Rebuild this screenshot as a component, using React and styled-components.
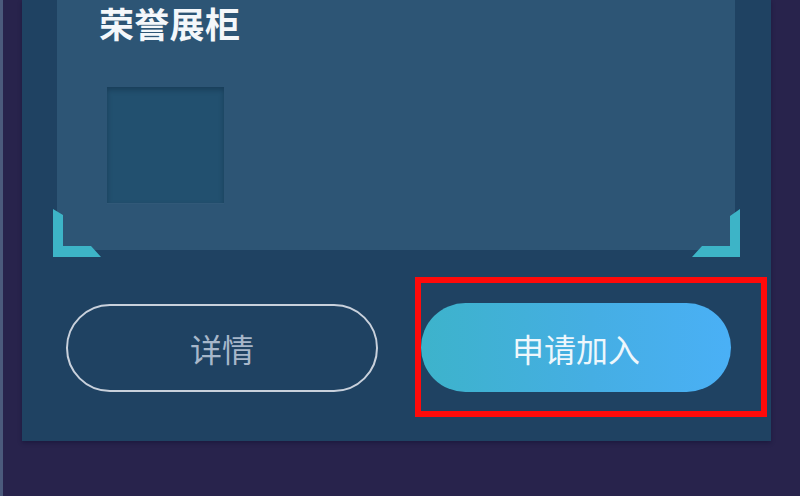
import React from "react";
import styled, { createGlobalStyle } from "styled-components";

const GlobalStyle = createGlobalStyle`
  html, body {
    margin: 0;
    padding: 0;
    background: #28234c;
    font-family: "Noto Sans CJK SC", "Noto Sans", sans-serif;
  }
`;

const Page = styled.div`
  width: 800px;
  height: 496px;
  box-sizing: border-box;
  overflow: hidden;
  display: flex;
  align-items: flex-start;
  background: #28234c;
  border-left: 3px solid #4b5a7c;
  padding-left: 19px;
`;

const Card = styled.div`
  width: 749px;
  height: 441px;
  box-sizing: border-box;
  background: #1f4262;
  padding: 0 36px 0 35px;
  display: flex;
  flex-direction: column;
  box-shadow: 0 2px 4px rgba(10, 10, 40, 0.35);
`;

const Showcase = styled.div`
  position: relative;
  height: 250px;
  box-sizing: border-box;
  background: #2d5575;
  padding: 2px 0 0 42px;
  display: flex;
  flex-direction: column;
`;

const Title = styled.h2`
  margin: 0;
  font-size: 35px;
  line-height: 42px;
  font-weight: 700;
  color: #f4f7fa;
  letter-spacing: 0.3px;
`;

const Slot = styled.div`
  width: 117px;
  height: 116px;
  margin: 43px 0 0 8px;
  background: #22506f;
  box-shadow: inset 0 3px 5px rgba(10, 30, 50, 0.35), 0 1px 1px rgba(60, 100, 130, 0.3);
`;

const Bracket = styled.svg`
  position: absolute;
  bottom: -7px;
  width: 48px;
  height: 48px;
  ${(p) => (p.$side === "left" ? "left: -4px;" : "right: -5px;")}
`;

const Actions = styled.div`
  display: flex;
  align-items: center;
  gap: 43px;
  margin-top: 53px;
  padding-left: 9px;
`;

const Pill = styled.button`
  box-sizing: border-box;
  height: 89px;
  border-radius: 45px;
  font-family: "Noto Sans CJK SC", "Noto Sans", sans-serif;
  font-size: 32px;
  display: flex;
  align-items: center;
  justify-content: center;
  cursor: pointer;
  padding: 0;
`;

const GhostPill = styled(Pill)`
  width: 312px;
  height: 88px;
  background: transparent;
  border: 2px solid #c9d1dc;
  color: #a7b7ca;
`;

const JoinWrap = styled.div`
  position: relative;
`;

const PrimaryPill = styled(Pill)`
  width: 310px;
  border: none;
  color: #eef7fc;
  background: linear-gradient(90deg, #3db3cb 0%, #45aee3 55%, #4ab0f6 100%);
`;

const Highlight = styled.div`
  position: absolute;
  left: -6px;
  top: -26px;
  width: 352px;
  height: 140px;
  box-sizing: border-box;
  border: 6px solid #ff0a0a;
  pointer-events: none;
`;

function CornerMark({ side }) {
  const pts =
    side === "left"
      ? "0,0 10,6 10,37 38,37 48,48 0,48"
      : "48,0 38,7 38,37 10,37 0,48 48,48";
  return (
    <Bracket $side={side} viewBox="0 0 48 48">
      <polygon points={pts} fill="#3db4c7" />
    </Bracket>
  );
}

export default function App() {
  return (
    <>
      <GlobalStyle />
      <Page>
        <Card>
          <Showcase>
            <Title>荣誉展柜</Title>
            <Slot />
            <CornerMark side="left" />
            <CornerMark side="right" />
          </Showcase>
          <Actions>
            <GhostPill>详情</GhostPill>
            <JoinWrap>
              <PrimaryPill>申请加入</PrimaryPill>
              <Highlight />
            </JoinWrap>
          </Actions>
        </Card>
      </Page>
    </>
  );
}
